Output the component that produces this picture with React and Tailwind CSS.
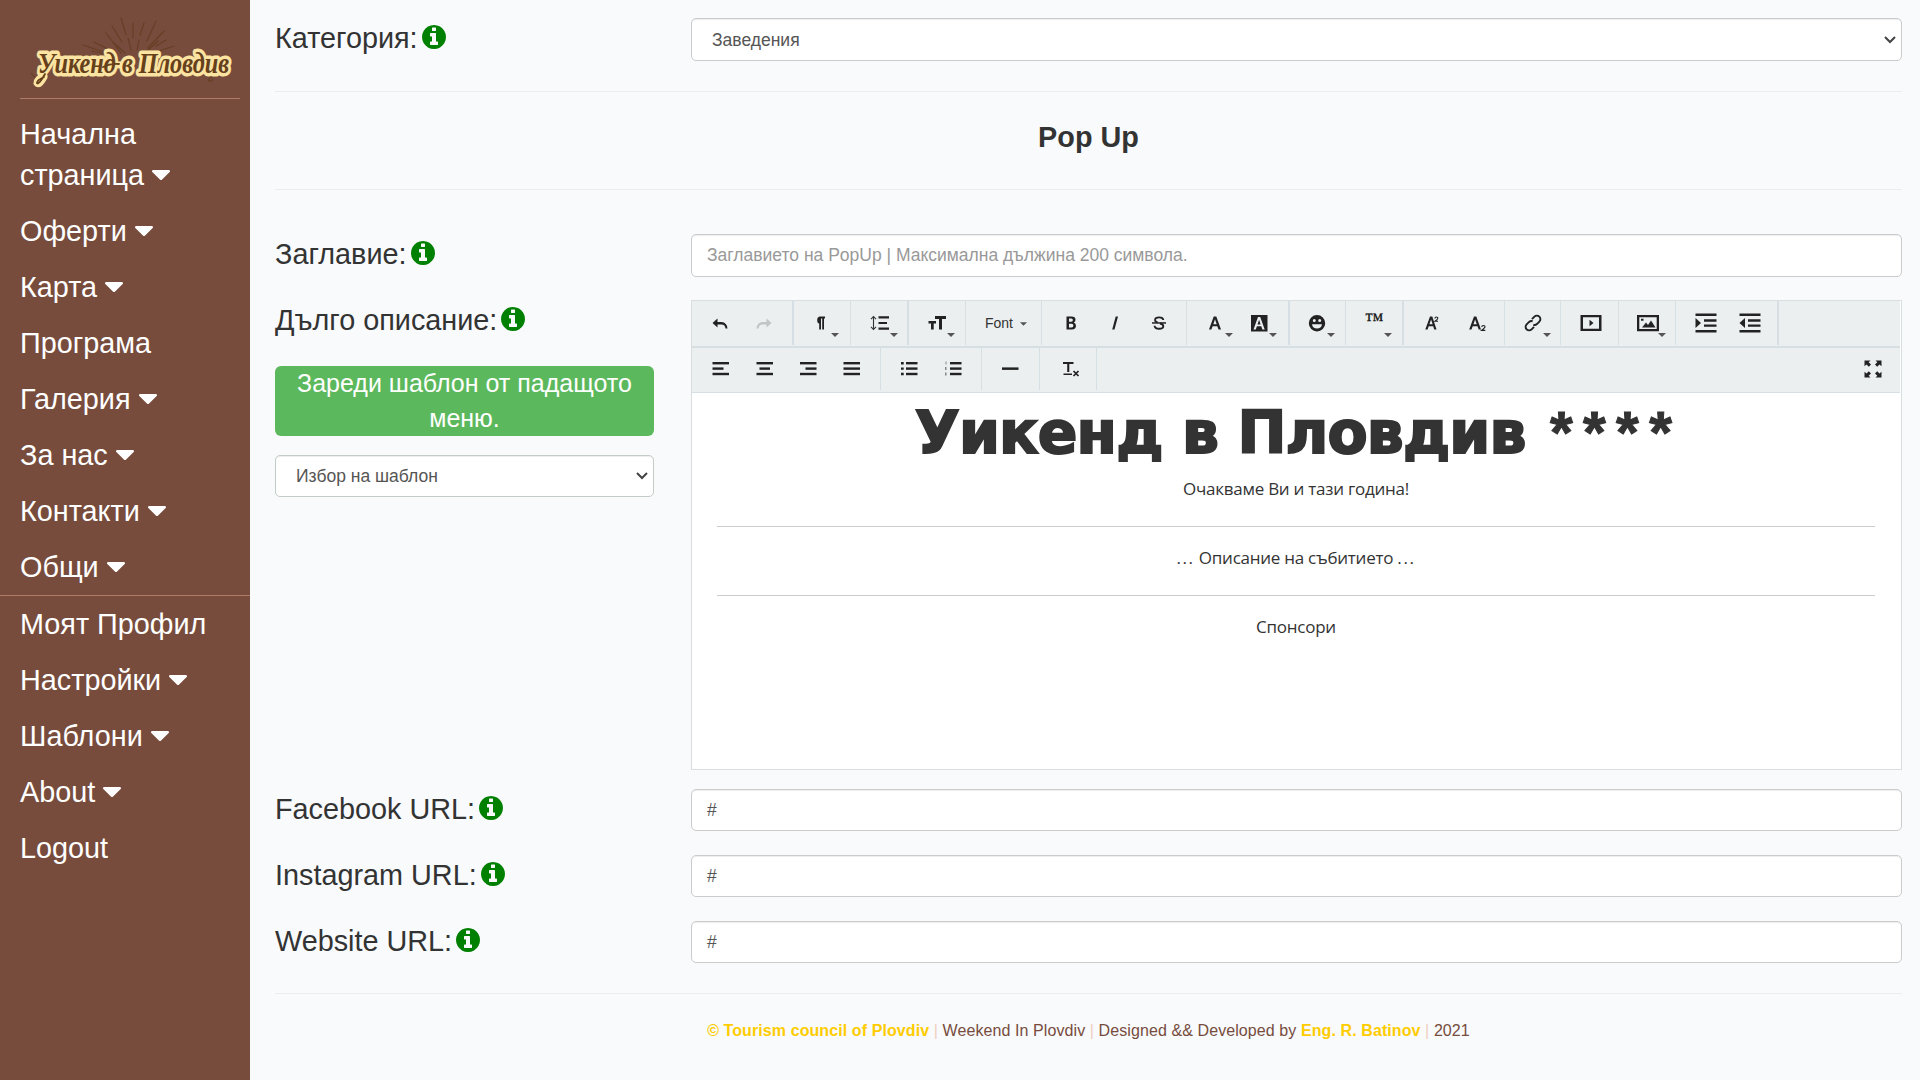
import React from "react";

const Caret = () => (
  <svg className="inline-block w-[18px] h-[10px] ml-[8px] align-[5px]" viewBox="12 192 296 169" preserveAspectRatio="none" fill="#fff">
    <path d="M31.3 192h257.3c17.8 0 26.7 21.5 14.1 34.1L174.1 354.7c-7.8 7.8-20.5 7.8-28.3 0L17.2 226.1C4.6 213.5 13.5 192 31.3 192z" />
  </svg>
);

const Info = () => (
  <svg className="w-6 h-6 mt-[6.5px] ml-[4px] shrink-0" viewBox="0 128 1536 1536" fill="#008000">
    <path d="M1024 1376v-160q0-14-9-23t-23-9h-96v-512q0-14-9-23t-23-9h-320q-14 0-23 9t-9 23v160q0 14 9 23t23 9h96v320h-96q-14 0-23 9t-9 23v160q0 14 9 23t23 9h448q14 0 23-9t9-23zm-128-896v-160q0-14-9-23t-23-9h-192q-14 0-23 9t-9 23v160q0 14 9 23t23 9h192q14 0 23-9t9-23zm640 416q0 209-103 385.5t-279.5 279.5-385.5 103-385.5-103-279.5-279.5-103-385.5 103-385.5 279.5-279.5 385.5-103 385.5 103 279.5 279.5 103 385.5z" />
  </svg>
);

const Logo = () => (
  <svg className="block w-[220px] h-[80px] overflow-visible" viewBox="20 15 220 80">
    <g stroke="#5f3a1c" strokeLinecap="round" strokeWidth="1.2" opacity="0.7">
      <path d="M121 18l5 17M133 23v15M144 23l-4 12M156 21l-9 20M106 33l15 20M112 26l10 16M164 31l-16 17M158 41l-12 11M83 45l26 9M94 42l20 10M174 46l-18 6M113 42l12 11M128 38l3 12M139 40l-2 10M166 40l-10 6M92 51l12 3" />
    </g>
    <g fill="none" stroke="#5f3a1c" strokeWidth="1.2" opacity="0.7">
      <path d="M31 73q3 4 5 5M230 68q-4 8-12 8q-6-1-10 4q3 3 5-1" />
    </g>
    <path d="M44 77q-5 9-7 6q0-4 7-7M103 68q8-4 17-3" fill="none" stroke="#fbe3a1" strokeWidth="7" strokeLinecap="round" />
    <text
      x="38" y="73" textLength="191" lengthAdjust="spacingAndGlyphs"
      fontFamily="Liberation Serif, serif" fontStyle="italic" fontWeight="700" fontSize="30"
      fill="#65401b" stroke="#fbe3a1" strokeWidth="7" strokeLinejoin="round" paintOrder="stroke"
    >Уикенд в Пловдив</text>
    <path d="M45 74q-6 11-8 9q0-3 7-6M103 67q8-4 16-3" fill="none" stroke="#65401b" strokeWidth="1.8" strokeLinecap="round" />
  </svg>
);

const topNav = [
  ["Оферти", true], ["Карта", true], ["Програма", false], ["Галерия", true],
  ["За нас", true], ["Контакти", true], ["Общи", true],
];
const bottomNav = [
  ["Моят Профил", false], ["Настройки", true], ["Шаблони", true], ["About", true], ["Logout", false],
];

const NavItem = ({ label, caret }) => (
  <a className="block px-5 py-2 h-14 leading-[41px] whitespace-nowrap">
    {label}{caret && <Caret />}
  </a>
);

const Sidebar = () => (
  <aside className="w-[250px] h-[1080px] shrink-0 bg-[#774c3c] text-white text-[28.8px]">
    <div className="pl-5 pt-[15px] pr-[10px]">
      <Logo />
      <div className="h-px mt-[3px] bg-[#b07c6a]" />
    </div>
    <nav className="pt-[7px]">
      <a className="block pl-5 pr-4 pt-2 pb-[7px] leading-[41px]">Начална<br />страница<Caret /></a>
      {topNav.map(([l, c]) => <NavItem key={l} label={l} caret={c} />)}
      <div className="h-px bg-[#b07c6a]" />
      {bottomNav.map(([l, c]) => <NavItem key={l} label={l} caret={c} />)}
    </nav>
  </aside>
);

const Label = ({ children }) => (
  <div className="flex items-start h-[40px] leading-[40px] text-[28.8px] text-[#333] whitespace-nowrap">
    <span>{children}</span><Info />
  </div>
);

const Row = ({ label, children, className }) => (
  <div className={"grid grid-cols-[416px_1211px] " + className}>
    <Label>{label}</Label>
    {children}
  </div>
);

const Chevron = () => (
  <svg className="w-3 h-2" viewBox="0 0 12 8" fill="none" stroke="#444" strokeWidth="2"><path d="M1 1l5 5 5-5" /></svg>
);

const Select = ({ children, className }) => (
  <div className={"flex items-center justify-between pl-[20px] pr-[5px] border rounded-[5px] bg-white text-[17.5px] text-[#555] shadow-[inset_0_1px_1px_rgba(0,0,0,0.075)] " + className}>
    <span className="pt-px">{children}</span><Chevron />
  </div>
);

const Input = ({ children, className }) => (
  <div className={"flex items-center pl-[15px] border border-[#ccc] rounded-[5px] bg-white text-[17.5px] shadow-[inset_0_1px_1px_rgba(0,0,0,0.075)] " + className}>
    {children}
  </div>
);

const Ico = ({ children, className = "" }) => (
  <svg className={"w-6 h-6 " + className} viewBox="0 0 24 24" fill="#222" stroke="none">{children}</svg>
);

const Btn = ({ children, drop }) => (
  <div className="relative flex items-center justify-center w-[44px] h-full shrink-0">
    {children}
    {drop && (
      <svg className="absolute left-[32px] top-[31.5px] w-2 h-1" viewBox="0 0 8 4" fill="#555"><path d="M0 0h8L4 4z" /></svg>
    )}
  </div>
);

const Group = ({ children, className }) => (
  <div className={"flex h-full border-[#d6dfe3] shrink-0 " + className}>{children}</div>
);

const bars = (xs) => xs.map(([x, w], i) => <rect key={i} x={x} y={5 + i * 5.4} width={w} height="2.4" />);

const Toolbar = () => (
  <div className="w-[1208px] bg-[#ebeff0]">
    <div className="flex h-[45px] pb-px">
      <Group className="w-[102px] pl-[6px] border-r-2">
        <Btn><Ico><path d="M4.500 12l5-4.500v3.500h4q5.500 0.500 6 6.500l-2-0.100q-0.500-4-4-4h-4v3.200z" /></Ico></Btn>
        <Btn><Ico className="opacity-20"><path d="M19.500 12l-5-4.500v3.500h-4q-5.500 0.500-6 6.500l2-0.100q0.500-4 4-4h4v3.200z" /></Ico></Btn>
      </Group>
      <Group className="w-[57px] pl-[5px] border-r">
        <Btn drop><Ico><path d="M16 5.500v2h-1v11h-1.800v-11h-1.200v11h-1.800v-6q-2 0-2-3.500t3-3.500z" /></Ico></Btn>
      </Group>
      <Group className="w-[58px] pl-[6.5px] border-r-2">
        <Btn drop><Ico><path d="M10.500 5.200h10.500v2.300H10.500zM10.500 10.900h8.500v2.200H10.500zM10.500 16.400h10.500v2.300H10.500z" /><path d="M5.500 5.500v13M3 8.200l2.500-2.700L8 8.200M3 15.800l2.500 2.700L8 15.800" fill="none" stroke="#333" strokeWidth="1.100" /></Ico></Btn>
      </Group>
      <Group className="w-[57px] pl-[6px] border-r">
        <Btn drop><Ico><path d="M10 5h11v3h-4v10.500h-3V8h-4zM3.500 10H11v2.500H8.700v6H6v-6H3.500z" /></Ico></Btn>
      </Group>
      <Group className="w-[76px] pl-[19px] pt-px border-r items-center text-[14px] text-[#333]">
        <span>Font</span>
        <svg className="ml-[7px] w-[7px] h-1" viewBox="0 0 8 4" fill="#555"><path d="M0 0h8L4 4z" /></svg>
      </Group>
      <Group className="w-[145px] pl-[6.5px] border-r">
        <Btn><Ico><path fillRule="evenodd" d="M7.500 5.500h5q4 0 4 3.300 0 2-1.700 2.800 2.200 0.700 2.200 3.200 0 3.700-4.200 3.700H7.500zM10 7.500v3.200h2.300q1.600 0 1.600-1.600t-1.600-1.600zM10 12.700v3.700h2.600q1.800 0 1.800-1.900t-1.800-1.800z" /></Ico></Btn>
        <Btn><Ico><path d="M12.700 5.500h2.300l-3.500 13H9.200z" /></Ico></Btn>
        <Btn>
          <Ico>
            <path d="M5 11.200h14v1.500H5z" />
            <path d="M16.300 9q-0.300-2.600-4.200-2.600-4 0-4 2.500 0 1.800 2.500 2.500M13 12.500q3.300 0.700 3.300 2.800 0 2.500-4.200 2.500-4.300 0-4.500-3" fill="none" stroke="#222" strokeWidth="1.900" />
          </Ico>
        </Btn>
      </Group>
      <Group className="w-[103px] pl-[6px] border-r-2">
        <Btn drop><Ico><path fillRule="evenodd" d="M10.700 5.500h2.600l4.700 13h-2.500l-1.200-3.300H9.600l-1.200 3.300H6zM12 8.300l-1.700 4.900h3.400z" /></Ico></Btn>
        <Btn drop><Ico><path fillRule="evenodd" d="M4 4h16.500v16.500H4zM11 6l-4.500 12.500h2.300l1.100-3.200h4.400l1.100 3.200h2.300L13.200 6zM12.100 8.700l1.500 4.700h-3.100z" /></Ico></Btn>
      </Group>
      <Group className="w-[56px] pl-[4.5px] border-r">
        <Btn drop>
          <Ico><path fillRule="evenodd" d="M12 4a8.200 8.200 0 1 1 0 16.400A8.200 8.200 0 0 1 12 4zM9.300 8a1.500 1.500 0 1 0 0 3 1.500 1.500 0 0 0 0-3zM14.700 8a1.500 1.500 0 1 0 0 3 1.500 1.500 0 0 0 0-3zM7 13.200q0.700 4.300 5 4.300t5-4.300z" /></Ico>
        </Btn>
      </Group>
      <Group className="w-[58px] pl-[6px] border-r-2">
        <Btn drop><span className="font-['Liberation_Serif',serif] text-[19px] leading-none text-[#111] -mt-[7px] [-webkit-text-stroke:0.3px_#111]">™</span></Btn>
      </Group>
      <Group className="w-[101px] pl-[6px] border-r">
        <Btn><Ico>
          <path fillRule="evenodd" d="M10 5.500h2.300l4.200 13h-2.300l-1-3.300H8.700l-1.100 3.300H5.300zM11.100 8.500l-1.700 4.800h3.200z" />
          <path d="M14.900 7.500q0-1.500 1.500-1.500t1.400 1.300q0 0.800-2.800 3h3" fill="none" stroke="#222" strokeWidth="1.100" />
        </Ico></Btn>
        <Btn><Ico className="ml-px">
          <path fillRule="evenodd" d="M9 5.500h2.300l4.700 13h-2.300l-1.200-3.300H7.700l-1.200 3.300H4.200zM10.100 8.500l-1.700 4.800h3.400z" />
          <path d="M16.800 16q0-1.500 1.600-1.500t1.600 1.300q0 0.900-3.200 3.500h3.500" fill="none" stroke="#222" strokeWidth="1.200" />
        </Ico></Btn>
      </Group>
      <Group className="w-[56px] pl-[6px] border-r">
        <Btn drop>
          <Ico><g transform="rotate(-45 12 12)" fill="none" stroke="#222" strokeWidth="1.900"><path d="M10 15.500H6.500a3.500 3.500 0 0 1 0-7H10a3.500 3.500 0 0 1 3 2M14 8.500h3.500a3.500 3.500 0 0 1 0 7H14a3.500 3.500 0 0 1-3-2" /></g></Ico>
        </Btn>
      </Group>
      <Group className="w-[58px] pl-[8px] border-r">
        <Btn><Ico><path fillRule="evenodd" d="M1.500 4h21v16h-21zM4 6.200v11.600h16V6.200zM10.500 8.800l4 3.200-4 3.200z" /></Ico></Btn>
      </Group>
      <Group className="w-[57px] pl-[7px] border-r">
        <Btn drop><Ico><path fillRule="evenodd" d="M1 4h22v16.200H1zM3.300 6.200V18h17.400V6.200z" /><path d="M6 16.500l4-5 2 2.500 3-4.500 4.500 7zM5 7.800h2.500v2H5z" /></Ico></Btn>
      </Group>
      <Group className="w-[103px] pl-[7.5px] border-r-2">
        <Btn><Ico><path d="M1.500 2.500h21v2.600h-21zM10 8.300h12.500v2.400H10zM10 13.400h12.500v2.400H10zM1.500 19h21v2.600h-21zM1.500 7l5.500 5-5.500 5z" /></Ico></Btn>
        <Btn><Ico><path d="M1.500 2.500h21v2.600h-21zM10 8.300h12.500v2.400H10zM10 13.400h12.500v2.400H10zM1.500 19h21v2.600h-21zM7 7l-5.500 5 5.500 5z" /></Ico></Btn>
      </Group>
    </div>
    <div className="h-[2px] bg-[#d6dfe3]" />
    <div className="flex h-[45px] pb-[2px] border-b border-[#d6dfe3]">
      <Group className="w-[189px] pl-[6px] border-r">
        <Btn><Ico>{bars([[4.5, 16.5], [4.5, 11], [4.5, 16.5]])}</Ico></Btn>
        <Btn><Ico>{bars([[4.5, 16.5], [7.5, 10.5], [4.5, 16.5]])}</Ico></Btn>
        <Btn><Ico>{bars([[4, 16.5], [9.5, 11], [4, 16.5]])}</Ico></Btn>
        <Btn><Ico>{bars([[3.5, 16.5], [3.5, 16.5], [3.5, 16.5]])}</Ico></Btn>
      </Group>
      <Group className="w-[101px] pl-[6px] border-r">
        <Btn><Ico>{bars([[9, 11.5], [9, 11.5], [9, 11.5]])}<path d="M4 5h2.700v2.400H4zM4 10.400h2.700v2.400H4zM4 15.800h2.700v2.400H4z" /></Ico></Btn>
        <Btn><Ico>{bars([[9, 11.5], [9, 11.5], [9, 11.5]])}<path fill="#888" d="M4.500 4.500h1v3h-1zM4 10h1.500v3H4zM4 15.500h1.500v3H4z" /></Ico></Btn>
      </Group>
      <Group className="w-[58px] pl-[6px] border-r">
        <Btn><Ico><path d="M4 10.400h16.500v2.500H4z" /></Ico></Btn>
      </Group>
      <Group className="w-[57px] pl-[9px] border-r">
        <Btn><Ico><path d="M4 5h10.500v2H10.300v8H8.200V7H4zM4.500 16.500h8.500v1.600H4.500z" /><path d="M14.500 14l5 5M19.500 14l-5 5" stroke="#222" strokeWidth="1.700" /></Ico></Btn>
      </Group>
      <div className="flex-1" />
      <div className="pr-[5px] flex">
        <Btn><Ico><path d="M3.500 3.500h6L7.700 5.300l2.300 2.300L7.800 9.800 5.500 7.400 3.500 9.300zM20.500 3.500h-6l1.800 1.800L14 7.600l2.200 2.200 2.300-2.400 2 1.900zM3.500 20.500h6l-1.800-1.800 2.300-2.300-2.200-2.200-2.300 2.400-2-1.900zM20.500 20.500h-6l1.800-1.800-2.300-2.300 2.200-2.200 2.300 2.400 2-1.900z" /></Ico></Btn>
      </div>
    </div>
  </div>
);

const bodyText = "font-['Open_Sans',sans-serif] text-[17px] leading-[24px] tracking-[-0.25px] text-[#333]";

const Editor = () => (
  <div className="h-[470px] border border-[#d9dfe1] bg-white">
    <Toolbar />
    <div className="pl-[25px] pr-[26px] pt-[5px] text-center whitespace-nowrap">
      <div className="h-[69px] leading-[70px] font-['DejaVu_Sans',sans-serif] font-bold text-[58.5px] text-[#333] tracking-[-0.9px] [-webkit-text-stroke:2px_#333]">
        <span>Уикенд в Пловдив</span> <span className="font-['Liberation_Sans',sans-serif] tracking-[10.3px] ml-[5px] mr-[-5px] [-webkit-text-stroke:1px_#333]">****</span>
      </div>
      <div className={"mt-[10px] " + bodyText}>Очакваме Ви и тази година!</div>
      <div className="h-px mt-[25px] bg-[#ccc]" />
      <div className={"mt-[19px] " + bodyText}><span className="tracking-[1.6px]">...</span> Описание на събитието <span className="tracking-[1.6px]">...</span></div>
      <div className="h-px mt-[25px] bg-[#ccc]" />
      <div className={"mt-[19px] " + bodyText}>Спонсори</div>
    </div>
  </div>
);

export default function App() {
  return (
    <div className="flex w-[1920px] h-[1080px] overflow-hidden bg-[#f8fafc] font-['Liberation_Sans',Arial,sans-serif]">
      <Sidebar />
      <main className="w-[1627px] ml-[25px] pt-[18px]">
        <Row label="Категория:" className="h-[43px]">
          <Select className="h-[43px] border-[#ccc]">Заведения</Select>
        </Row>
        <div className="h-px mt-[30px] bg-[#ebedef]" />
        <h2 className="h-[97px] pt-[25px] leading-[40px] text-center text-[28.8px] font-bold text-[#333]">Pop Up</h2>
        <div className="h-px bg-[#ebedef]" />
        <Row label="Заглавие:" className="mt-[44px] h-[43px]">
          <Input className="h-[43px] text-[#999]">Заглавието на PopUp | Максимална дължина 200 символа.</Input>
        </Row>
        <div className="grid grid-cols-[379px_1211px] gap-x-[37px] mt-[23px]">
          <div>
            <Label>Дълго описание:</Label>
            <div className="mt-[26px] h-[70px] rounded-[6px] bg-[#5cb85c] text-white text-[25px] leading-[35px] text-center">
              Зареди шаблон от падащото<br />меню.
            </div>
            <Select className="mt-[19px] h-[42px] border-[#c3ccc6]">Избор на шаблон</Select>
          </div>
          <Editor />
        </div>
        <Row label="Facebook URL:" className="mt-[19px] h-[42px]"><Input className="text-[#555]">#</Input></Row>
        <Row label="Instagram URL:" className="mt-[24px] h-[42px]"><Input className="text-[#555]">#</Input></Row>
        <Row label="Website URL:" className="mt-[24px] h-[42px]"><Input className="text-[#555]">#</Input></Row>
        <div className="h-px mt-[30px] bg-[#ebedef]" />
        <footer className="pt-[25px] text-center text-[16px] leading-[24px] tracking-[0.09px] text-[#774c3c]">
          <span className="font-bold text-[#fc0]">© Tourism council of Plovdiv</span> <span className="text-[#f0cfc0]">|</span> Weekend In Plovdiv <span className="text-[#f0cfc0]">|</span> Designed &amp;&amp; Developed by <span className="font-bold text-[#fc0]">Eng. R. Batinov</span> <span className="text-[#f0cfc0]">|</span> 2021
        </footer>
      </main>
    </div>
  );
}
